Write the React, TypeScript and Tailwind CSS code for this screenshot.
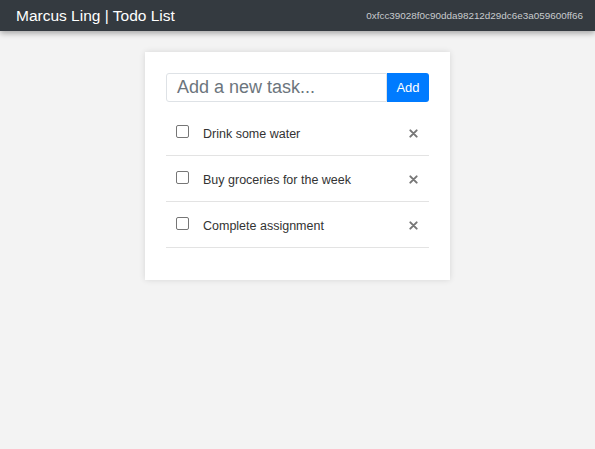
import React from "react";

const items = ["Drink some water", "Buy groceries for the week", "Complete assignment"];

export default function App() {
  return (
    <div className="min-h-[449px] bg-[#f3f3f3]" style={{ fontFamily: '"Liberation Sans", Arial, sans-serif' }}>
      <header className="h-[31px] bg-[#343a40] flex items-center justify-between pl-4 pr-3 shadow-[0_2px_6px_rgba(0,0,0,0.35)]">
        <span className="text-white text-[15.5px] leading-none">Marcus Ling | Todo List</span>
        <span className="text-[#c8cbce] text-[9.9px] leading-none">0xfcc39028f0c90dda98212d29dc6e3a059600ff66</span>
      </header>
      <div className="flex justify-center pt-[21px]">
        <div className="w-[305px] bg-white p-[21px] pb-[32px] shadow-[0_0_6px_rgba(0,0,0,0.12)]">
          <div className="flex h-[29px]">
            <div className="flex-1 border border-[#dee2e6] rounded-l-[3px] flex items-center px-[10px] text-[18px] text-[#6c757d]">
              Add a new task...
            </div>
            <button className="w-[42px] bg-[#007bff] text-white text-[13px] rounded-r-[3px] flex items-center justify-center">
              Add
            </button>
          </div>
          <div className="mt-[8px]">
            {items.map((t) => (
              <div key={t} className="h-[46px] border-b border-[#e3e3e3] flex items-center pl-[10px] pr-[11px]">
                <span className="w-[13px] h-[13px] border border-[#767676] rounded-[2px] bg-white mr-[14px] -mt-[2px]" />
                <span className="flex-1 text-[12.5px] text-[#333] mt-[4px]">{t}</span>
                <svg width="9" height="9" viewBox="0 0 10 10" className="text-[#777] mt-[2px]">
                  <path d="M1.5 1.5 L8.5 8.5 M8.5 1.5 L1.5 8.5" stroke="currentColor" strokeWidth="2.2" strokeLinecap="round" />
                </svg>
              </div>
            ))}
          </div>
        </div>
      </div>
    </div>
  );
}
